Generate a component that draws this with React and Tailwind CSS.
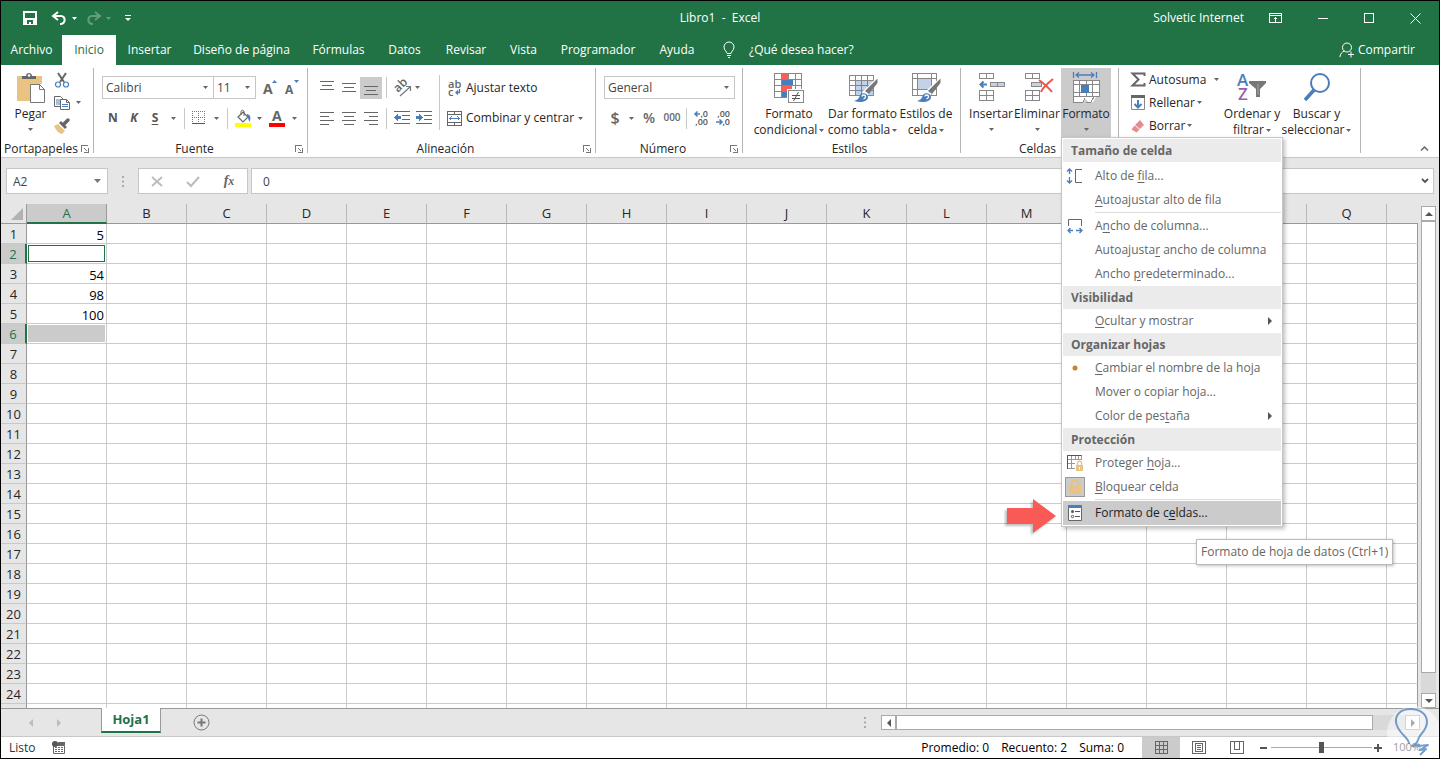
// Packages
import React from 'react';
import clsx from 'clsx';

const tabs = [
  { label: 'Archivo', width: 'w-[61px]' },
  { label: 'Inicio', width: 'w-[54px]', active: true },
  { label: 'Insertar', width: 'w-[67px]' },
  { label: 'Diseño de página', width: 'w-[117px]' },
  { label: 'Fórmulas', width: 'w-[77px]' },
  { label: 'Datos', width: 'w-[55px]' },
  { label: 'Revisar', width: 'w-[68px]' },
  { label: 'Vista', width: 'w-[47px]' },
  { label: 'Programador', width: 'w-[102px]' },
  { label: 'Ayuda', width: 'w-[56px]' }
];

const columns = 'ABCDEFGHIJKLMNOPQ'.split('');
const rows = Array.from({ length: 25 }, (_, i) => i + 1);
const values = { 1: '5', 3: '54', 4: '98', 5: '100' };

const Icon = ({ w = 16, h = 16, children, ...props }) => (
  <svg
    width={w}
    height={h}
    viewBox={`0 0 ${w} ${h}`}
    fill="none"
    className="shrink-0 overflow-visible"
    aria-hidden="true"
    {...props}
  >
    {children}
  </svg>
);

const Caret = ({ color = '#666' }) => (
  <Icon w={5} h={3}>
    <path d="M0 0h5L2.5 3z" fill={color} />
  </Icon>
);

const Divider = ({ className }) => (
  <div className={clsx('flex justify-center shrink-0', className)}>
    <div className="w-px h-full bg-[#c8c8c8]" />
  </div>
);

const Group = ({ label, className, launcher, children }) => (
  <section className={clsx('flex flex-col shrink-0 h-[85px] border-r border-[#b5b5b5]', className)} aria-label={label}>
    <div className="flex h-[73px] shrink-0">{children}</div>
    <div className="flex items-center h-4 shrink-0 pr-1">
      <div className="grow text-center leading-4">{label}</div>
      {launcher && (
        <button type="button" aria-label={`Más opciones de ${label}`}>
          <Icon w={8} h={8} shapeRendering="crispEdges">
            <path d="M.5 6.500V.5h6" stroke="#777" />
            <path d="M7 3v4H3M3 3l3 3" stroke="#777" />
          </Icon>
        </button>
      )}
    </div>
  </section>
);

const BigButton = ({ icon, lines, className, active }) => (
  <button
    type="button"
    className={clsx('flex flex-col items-center shrink-0 h-[69px] pt-[5px]', className, active && 'bg-[#cbcbcb]')}
  >
    <span className="flex items-center justify-center h-[30px]">{icon}</span>
    <span className="mt-[3px] leading-4 whitespace-nowrap">{lines[0]}</span>
    <span className="flex items-center justify-center gap-0.5 h-4 leading-4 whitespace-nowrap">
      {lines[1]}
      <Caret />
    </span>
  </button>
);

const Tool = ({ label, className = 'w-[22px]', active, children }) => (
  <button
    type="button"
    aria-label={label}
    className={clsx('flex items-center justify-center shrink-0 h-[22px]', className, active && 'bg-[#cbcbcb]')}
  >
    {children}
  </button>
);

const Picker = ({ label, value, className }) => (
  <div className={clsx('relative flex items-center h-[23px] border border-[#c6c6c6]', className)}>
    <select aria-label={label} defaultValue={value} className="appearance-none w-full h-full pl-[3px] text-[#444]">
      <option>{value}</option>
    </select>
    <span className="absolute right-[5px] pointer-events-none">
      <Caret />
    </span>
  </div>
);

const Lines = ({ rows: list }) => (
  <Icon w={14} h={14} shapeRendering="crispEdges">
    {list.map(([x, y, w]) => (
      <path key={y} d={`M${x} ${y}.5h${w}`} stroke="#666" />
    ))}
  </Icon>
);

const PasteIcon = () => (
  <Icon w={30} h={30}>
    <path d="M1 3h25v8H15v17H1z" fill="#eac282" />
    <path d="M6 6V3h4c0-4 6-4 6 0h4v3z" fill="#666" />
    <circle cx="13" cy="2.500" r="1.300" fill="#fff" />
    <path d="M14.500 11.500h9l5 5v13h-14z" fill="#fff" stroke="#777" />
    <path d="M23.500 11.500v5h5" stroke="#777" />
  </Icon>
);

const CutIcon = () => (
  <Icon>
    <path d="M4 1l6 9M12 1L6 10" stroke="#666" strokeWidth="2" />
    <circle cx="4" cy="12.500" r="2.500" stroke="#4a7ebb" strokeWidth="1.200" />
    <circle cx="12" cy="12.500" r="2.500" stroke="#4a7ebb" strokeWidth="1.200" />
  </Icon>
);

const CopyIcon = () => (
  <Icon>
    <path d="M.5 1.500h6l3 3v7h-9z" fill="#fff" stroke="#666" />
    <path d="M2 5h4M2 7h4M2 9h4" stroke="#4a7ebb" />
    <path d="M6.500 4.500h6l3 3v7h-9z" fill="#fff" stroke="#666" />
    <path d="M12.500 4.500v3h3" stroke="#666" />
    <path d="M8 9.500h6M8 11.500h6" stroke="#4a7ebb" />
  </Icon>
);

const BrushIcon = () => (
  <Icon>
    <path d="M0 8l4-2 7 7-3 3c-4-1-6-4-8-8z" fill="#eac282" />
    <path d="M5 5l2-2 6 6-2 2z" fill="#666" />
    <path d="M10 6l4-4" stroke="#666" strokeWidth="3.500" strokeLinecap="round" />
  </Icon>
);

const FontSizeIcon = ({ up }) => (
  <Icon w={16} h={18}>
    <text x="0" y="15" fontSize={up ? 14 : 12} fontWeight="700" fill="#666" className="font-['Open_Sans',sans-serif]">
      A
    </text>
    <path d={up ? 'M9 4l2.500-3L14 4z' : 'M9 1l2.500 3L14 1z'} fill="#4a7ebb" />
  </Icon>
);

const BordersIcon = () => (
  <Icon w={14} h={14} shapeRendering="crispEdges">
    <path d="M0 .5h13M0 6.500h13M.5 0v12M6.500 0v12M12.500 0v12" stroke="#777" strokeDasharray="1 1" />
    <path d="M0 12.500h13" stroke="#555" />
  </Icon>
);

const FillIcon = () => (
  <Icon w={16} h={18}>
    <path d="M3 8l5-5 5 5-5 5z" fill="#fff" stroke="#666" strokeWidth="1.200" />
    <path d="M6 6V3c0-2.500 3-2.500 3 0v4" stroke="#666" />
    <path d="M12 5c4 1 4 4 2.500 8-1-2-1-4-2.500-5z" fill="#4a7ebb" />
    <path d="M0 14h16v4H0z" fill="#ff0" />
  </Icon>
);

const FontColorIcon = () => (
  <Icon w={16} h={18}>
    <text x="3" y="12" fontSize="14" fontWeight="700" fill="#666" className="font-['Open_Sans',sans-serif]">
      A
    </text>
    <path d="M0 14h16v4H0z" fill="#f00" />
  </Icon>
);

const OrientationIcon = () => (
  <Icon w={17} h={18}>
    <text
      x="4"
      y="14"
      fontSize="12"
      fontWeight="600"
      fill="#666"
      transform="rotate(-45 4 14)"
      className="font-['Open_Sans',sans-serif]"
    >
      ab
    </text>
    <path d="M6 17l10-9M12 7.500h4.500V12" stroke="#777" strokeWidth="1.200" />
  </Icon>
);

const IndentIcon = ({ right }) => (
  <Icon w={16} h={14} shapeRendering="crispEdges">
    <path d="M0 .5h16M8 4.500h8M8 8.500h8M0 12.500h16" stroke="#666" />
    <path d={right ? 'M0 5h3V2.500L7 6.500 3 10V8H0z' : 'M7 5H4V2.500L0 6.500 4 10V8h3z'} fill="#4a7ebb" />
  </Icon>
);

const WrapIcon = () => (
  <Icon w={14} h={18}>
    <text x="0" y="9" fontSize="11" fontWeight="600" fill="#666" className="font-['Open_Sans',sans-serif]">
      ab
    </text>
    <text x="0" y="17" fontSize="11" fontWeight="600" fill="#666" className="font-['Open_Sans',sans-serif]">
      c
    </text>
    <path d="M11.500 10v3.500H8M10 11.500l-2 2 2 2" stroke="#4a7ebb" strokeWidth="1.300" />
  </Icon>
);

const MergeIcon = () => (
  <Icon w={15} h={15} shapeRendering="crispEdges">
    <path d="M.5.5h14v14H.5zM0 3.500h15M0 11.500h15M7.500 0v3.500M7.500 11.500V15" stroke="#666" />
    <path d="M3 7.500h9M4.500 5.500l-2 2 2 2M10.500 5.500l2 2-2 2" stroke="#4a7ebb" />
  </Icon>
);

const DecimalIcon = ({ less }) => (
  <Icon w={16} h={16}>
    <text x="15" y="7" fontSize="9" textAnchor="end" fill="#555" className="font-['Open_Sans',sans-serif]">
      {less ? ',00' : ',0'}
    </text>
    <text x="15" y="15" fontSize="9" textAnchor="end" fill="#555" className="font-['Open_Sans',sans-serif]">
      {less ? ',0' : ',00'}
    </text>
    <path
      d={less ? 'M1 12h6M4.500 9.500L7 12l-2.500 2.500' : 'M2 4h5M4.500 1.500L2 4l2.500 2.500'}
      stroke="#4a7ebb"
      strokeWidth="1.500"
    />
  </Icon>
);

const ConditionalIcon = () => (
  <Icon w={30} h={30} shapeRendering="crispEdges">
    <path
      d="M.5.500h27v24H.5zM0 6.500h28M0 12.500h28M0 18.500h28M7.500 0v24M14.500 0v24M21.500 0v24"
      fill="#fff"
      stroke="#888"
    />
    <path d="M8 1h6v5H8zM8 13h10v5H8z" fill="#ff5b57" />
    <path d="M8 7h11v5H8zM8 19h5v5H8z" fill="#4a7ebb" />
    <path d="M13 16h17v14H13z" fill="#fff" />
    <path d="M14.500 17.500h15v12h-15z" fill="#fff" stroke="#888" />
    <path d="M18 22.500h8M18 25.500h8" stroke="#555" />
    <path d="M24.500 19l-5 9" stroke="#555" shapeRendering="auto" />
  </Icon>
);

const PaintBrush = () => (
  <g>
    <path d="M15 18L28 5.500l2 .5v3L20 22l-9 6z" fill="#fff" />
    <path d="M17 18L29.500 5.500V10L21 21z" fill="#777" />
    <path d="M6 28c4-1 5-3 6-6 2-3 8-2 8 2 0 5-8 6-14 4z" fill="#4a7ebb" />
    <path d="M14 23.500c0-2 3.500-2 3.500 0s-1 2-2 2.500" stroke="#fff" strokeWidth="1.300" />
  </g>
);

const TableIcon = () => (
  <Icon w={30} h={30}>
    <path
      d="M1.500 2.500h24v20h-24zM1 7.500h25M1 12.500h25M1 17.500h25M7.500 2v20M13.500 2v20M19.500 2v20"
      fill="#fff"
      stroke="#888"
      shapeRendering="crispEdges"
    />
    <path d="M8 8h17v14H8z" fill="#4a7ebb" opacity=".35" />
    <PaintBrush />
  </Icon>
);

const CellStylesIcon = () => (
  <Icon w={30} h={30}>
    <path
      d="M1.500.500h24v22h-24zM1 5.500h25M1 16.500h25M6.500 0v22M20.500 0v22"
      fill="#fff"
      stroke="#888"
      shapeRendering="crispEdges"
    />
    <path d="M7 6h13v10H7z" fill="#c3d2e6" />
    <PaintBrush />
  </Icon>
);

const CellsIcon = ({ remove }) => (
  <Icon w={30} h={30}>
    <g shapeRendering="crispEdges">
      <path d="M3.500.500h14v5h-14zM10.500 1v4" stroke="#888" />
      <path d="M3.500 17.500h14v10h-14zM3 22.500h15M10.500 17v10" stroke="#888" />
      {remove ? (
        <path d="M9.500 9.500h10v4h-10z" fill="#c3d2e6" stroke="#888" />
      ) : (
        <path d="M14.500 9.500h14v4h-14zM21.500 9v4" fill="#c3d2e6" stroke="#888" />
      )}
    </g>
    {remove ? (
      <path d="M17 7c4 3 9 7 13 12M31 6c-5 4-10 8-12 13" stroke="#f0524d" strokeWidth="2" />
    ) : (
      <path d="M11 11.500H4M7.500 8.500l-3 3 3 3" stroke="#4a7ebb" strokeWidth="2" />
    )}
  </Icon>
);

const FormatIcon = () => (
  <Icon w={30} h={32}>
    <path
      d="M2.500 0v6M25.500 0v6M5 3h18M8 .5L5 3l3 2.500M20 .5L23 3l-3 2.500"
      stroke="#4a7ebb"
      strokeWidth="1.300"
    />
    <path d="M2 8h27v17h-4l-3 5h-5l-2-3-3 3H2z" fill="#fff" />
    <path
      d="M2.500 8.500h26v16h-26zM2 12.500h27M2 20.500h27M8.500 8v17M21.500 8v17M15.500 8v4M15.500 20v5M2.500 24v6H12l2-4M15 30h5l3-5"
      stroke="#888"
      shapeRendering="crispEdges"
    />
    <path d="M10 13h8v8h-8z" fill="#4a7ebb" />
  </Icon>
);

const SortIcon = () => (
  <Icon w={30} h={30}>
    <text x="0" y="13" fontSize="17" fontWeight="600" fill="#4a7ebb" className="font-['Open_Sans',sans-serif]">
      A
    </text>
    <text x="1" y="27" fontSize="17" fontWeight="600" fill="#9a5fb4" className="font-['Open_Sans',sans-serif]">
      Z
    </text>
    <path d="M12 8h17v2l-6 6v8h-4v-8l-7-6z" fill="#777" />
    <path d="M21 11v11" stroke="#aaa" />
  </Icon>
);

const FindIcon = () => (
  <Icon w={30} h={30}>
    <circle cx="18" cy="10" r="9" stroke="#4a7ebb" strokeWidth="2" />
    <path d="M12 17L3 27" stroke="#4a7ebb" strokeWidth="3.500" />
  </Icon>
);

const TitleBar = () => (
  <header className="grid grid-cols-[1fr_auto_1fr] items-center h-[34px] shrink-0 text-white">
    <div className="flex items-center pl-5">
      <button type="button" aria-label="Guardar" className="flex justify-center w-[18px]">
        <Icon w={14} h={14} shapeRendering="crispEdges">
          <path d="M0 0h14v14H0zM2 1.500v5h10v-5zM4 9v4h2v-2h2v2h2V9z" fill="#fff" fillRule="evenodd" />
        </Icon>
      </button>
      <button type="button" aria-label="Deshacer" className="flex items-center gap-1 ml-3">
        <Icon w={17} h={14}>
          <path d="M7 1L2 5l5 4M2 5h8c5 0 5 8-1 8" stroke="#fff" strokeWidth="2" />
        </Icon>
        <Caret color="#fff" />
      </button>
      <button type="button" aria-label="Rehacer" className="flex items-center gap-1 ml-2 opacity-30">
        <Icon w={17} h={14}>
          <path d="M10 1l5 4-5 4M15 5H7c-5 0-5 8 1 8" stroke="#fff" strokeWidth="2" />
        </Icon>
        <Caret color="#fff" />
      </button>
      <button type="button" aria-label="Personalizar barra de herramientas" className="ml-[14px]">
        <Icon w={6} h={6}>
          <path d="M0 .5h6" stroke="#fff" />
          <path d="M0 3h6L3 6z" fill="#fff" />
        </Icon>
      </button>
    </div>
    <h1 className="whitespace-pre">Libro1  -  Excel</h1>
    <div className="flex items-center justify-end pr-[18px]">
      <span className="mr-[25px]">Solvetic Internet</span>
      <button type="button" aria-label="Opciones de la cinta" className="mr-9">
        <Icon w={13} h={11} shapeRendering="crispEdges">
          <path d="M.5.5h12v9H.5zM0 2.500h13M6.500 4.500v5M4.500 6.500l2-2 2 2" stroke="#fff" />
        </Icon>
      </button>
      <button type="button" aria-label="Minimizar" className="mr-9">
        <Icon w={10} h={11} shapeRendering="crispEdges">
          <path d="M0 5.500h10" stroke="#fff" />
        </Icon>
      </button>
      <button type="button" aria-label="Maximizar" className="mr-9">
        <Icon w={10} h={10} shapeRendering="crispEdges">
          <path d="M.5.5h9v9h-9z" stroke="#fff" />
        </Icon>
      </button>
      <button type="button" aria-label="Cerrar">
        <Icon w={11} h={11}>
          <path d="M.5.5l10 10M10.500.5l-10 10" stroke="#fff" />
        </Icon>
      </button>
    </div>
  </header>
);

const TabBar = () => (
  <nav className="flex h-[30px] shrink-0 text-white">
    {tabs.map(({ label, width, active }) => (
      <button
        key={label}
        type="button"
        className={clsx('shrink-0 whitespace-nowrap', width, active && 'bg-white text-[#217346]')}
      >
        {label}
      </button>
    ))}
    <button type="button" className="flex items-center gap-[14px] ml-[18px]">
      <Icon w={12} h={16}>
        <path d="M4 11.500c0-2-3-3-3-6.500a5 5 0 0110 0c0 3.500-3 4.500-3 6.500zM4 13.500h4M5 15.500h2" stroke="#fff" />
      </Icon>
      ¿Qué desea hacer?
    </button>
    <button type="button" className="flex items-center gap-1 ml-auto mr-6">
      <Icon w={15} h={16}>
        <circle cx="8" cy="5.500" r="4.500" stroke="#fff" />
        <path d="M1 15c0-3 2-5 4.500-6M9 12.500h6M12 9.500v6" stroke="#fff" />
      </Icon>
      Compartir
    </button>
  </nav>
);

const Key = ({ children }) => <span className="underline underline-offset-2">{children}</span>;

const MenuHeader = ({ children }) => (
  <div className="flex items-center h-[23px] pl-2 bg-[#ebebeb] font-bold">{children}</div>
);

const MenuRule = () => <div className="h-px mb-px ml-8 bg-[#dcdcdc]" />;

const MenuItem = ({ icon, submenu, active, children }) => (
  <button
    type="button"
    role="menuitem"
    className={clsx('flex items-center w-full h-6 pr-[9px]', active && 'bg-[#cbcbcb] text-[#222]')}
  >
    <span className="flex items-center justify-center shrink-0 w-6 mr-2">{icon}</span>
    <span className="grow text-left whitespace-nowrap">{children}</span>
    {submenu && (
      <Icon w={4} h={8}>
        <path d="M0 0v8l4-4z" fill="#555" />
      </Icon>
    )}
  </button>
);

const FormatMenu = () => (
  <div
    role="menu"
    className="absolute z-10 top-full left-0 w-[222px] p-px border border-[#c6c6c6] bg-white text-[#666] shadow-[2px_2px_4px_rgba(0,0,0,0.25)]"
  >
    <div className="mb-0.5">
      <MenuHeader>Tamaño de celda</MenuHeader>
    </div>
    <MenuItem
      icon={
        <Icon>
          <path
            d="M2.500 1v5M2.500 9v6M0 3.500L2.500 1 5 3.500M0 12.500L2.500 15 5 12.500"
            stroke="#4a7ebb"
            strokeWidth="1.300"
          />
          <path d="M15 1.500H8.500v13H15" stroke="#666" />
        </Icon>
      }
    >
      Alto de <Key>f</Key>ila...
    </MenuItem>
    <MenuItem>
      <Key>A</Key>utoajustar alto de fila
    </MenuItem>
    <MenuRule />
    <MenuItem
      icon={
        <Icon>
          <path
            d="M1 12.500h5M9 12.500h6M3.500 10L1 12.500 3.500 15M12.500 10l2.500 2.500-2.500 2.500"
            stroke="#4a7ebb"
            strokeWidth="1.300"
          />
          <path d="M1.500 8V1.500h13V8" stroke="#666" />
        </Icon>
      }
    >
      A<Key>n</Key>cho de columna...
    </MenuItem>
    <MenuItem>
      Autoajusta<Key>r</Key> ancho de columna
    </MenuItem>
    <MenuItem>
      Ancho <Key>p</Key>redeterminado...
    </MenuItem>
    <MenuHeader>Visibilidad</MenuHeader>
    <MenuItem submenu>
      <Key>O</Key>cultar y mostrar
    </MenuItem>
    <MenuHeader>Organizar hojas</MenuHeader>
    <MenuItem
      icon={
        <Icon w={6} h={6}>
          <circle cx="3" cy="3" r="2.500" fill="#c9822b" />
        </Icon>
      }
    >
      <Key>C</Key>ambiar el nombre de la hoja
    </MenuItem>
    <MenuItem>Mover o copiar hoja...</MenuItem>
    <MenuItem submenu>
      Color de pes<Key>t</Key>aña
    </MenuItem>
    <MenuHeader>Protección</MenuHeader>
    <MenuItem
      icon={
        <Icon>
          <path
            d="M.5.500h14v13H.5zM0 4.500h15M0 8.500h15M4.500 0v13M8.500 0v13M11.500 0v13"
            stroke="#999"
            shapeRendering="crispEdges"
          />
          <path d="M.5 14V.5h14" stroke="#555" />
          <path d="M8 5h8v11H8z" fill="#fff" />
          <path d="M9 10h7v6H9z" fill="#eac282" />
          <path d="M10.500 10V8c0-2.500 4-2.500 4 0v2" stroke="#eac282" strokeWidth="1.400" />
          <path d="M12.500 12v2.500" stroke="#fff" />
        </Icon>
      }
    >
      Proteger <Key>h</Key>oja...
    </MenuItem>
    <MenuItem
      icon={
        <span className="flex items-center justify-center size-5 border border-[#999] bg-[#cbcbcb]">
          <Icon w={12} h={16}>
            <path d="M0 7h12v8H0z" fill="#eac282" />
            <path d="M2.500 7V5c0-4.500 7-4.500 7 0v2" stroke="#eac282" strokeWidth="2" />
            <path d="M6 9v4M4.500 10h3" stroke="#cbcbcb" />
          </Icon>
        </span>
      }
    >
      <Key>B</Key>loquear celda
    </MenuItem>
    <MenuRule />
    <div className="relative">
      <MenuItem
        active
        icon={
          <Icon>
            <path d="M1.500.500h13v15h-13z" fill="#fff" stroke="#666" />
            <path d="M1 0h14v3H1z" fill="#4a7ebb" />
            <path d="M8 6.500h5M8 11.500h5" stroke="#555" />
            <circle cx="5.500" cy="6.500" r="1.500" fill="#555" />
            <circle cx="5.500" cy="11.500" r="1.200" stroke="#555" />
          </Icon>
        }
      >
        Formato de c<Key>e</Key>ldas...
      </MenuItem>
      <div className="absolute right-full -top-0.5 mr-1.5 drop-shadow-[-2px_2px_1px_rgba(0,0,0,0.25)]">
        <Icon w={50} h={36}>
          <path d="M0 9h26V0l23 17-23 17v-9H0z" fill="#fa5a55" />
        </Icon>
      </div>
      <div
        role="tooltip"
        className="absolute top-[38px] left-[133px] flex items-center h-[26px] px-1 border border-[#bbb] bg-white whitespace-nowrap shadow-[1px_1px_3px_rgba(0,0,0,0.25)]"
      >
        Formato de hoja de datos (Ctrl+1)
      </div>
    </div>
  </div>
);

const Ribbon = () => (
  <div className="flex h-[93px] shrink-0 pt-[3px] border-b border-[#c8c8c8] bg-white">
    <Group label="Portapapeles" className="w-[93px]" launcher>
      <BigButton icon={<PasteIcon />} lines={['Pegar']} className="ml-1.5 w-[47px]" />
      <div className="flex flex-col">
        <div className="flex items-center h-[23px]">
          <Tool label="Cortar" className="w-4">
            <CutIcon />
          </Tool>
        </div>
        <div className="flex items-center h-[23px]">
          <Tool label="Copiar" className="gap-[6px]">
            <CopyIcon />
            <Caret />
          </Tool>
        </div>
        <div className="flex items-center h-[23px]">
          <Tool label="Copiar formato" className="w-4">
            <BrushIcon />
          </Tool>
        </div>
      </div>
    </Group>
    <Group label="Fuente" className="w-[214px]" launcher>
      <div className="flex flex-col gap-2 pt-2 pl-2">
        <div className="flex items-center">
          <Picker label="Fuente" value="Calibri" className="w-[112px]" />
          <Picker label="Tamaño de fuente" value="11" className="w-[43px] -ml-px" />
          <Tool label="Aumentar tamaño de fuente" className="w-[22px] ml-1">
            <FontSizeIcon up />
          </Tool>
          <Tool label="Disminuir tamaño de fuente">
            <FontSizeIcon />
          </Tool>
        </div>
        <div className="flex items-center text-[#555] font-bold">
          <Tool label="Negrita">N</Tool>
          <Tool label="Cursiva" className="w-5 italic">
            K
          </Tool>
          <Tool label="Subrayado" className="w-[22px] underline underline-offset-2">
            S
          </Tool>
          <Tool label="Tipos de subrayado" className="w-[14px]">
            <Caret />
          </Tool>
          <Divider className="w-2 h-[21px]" />
          <Tool label="Bordes">
            <BordersIcon />
          </Tool>
          <Tool label="Más bordes" className="w-3">
            <Caret />
          </Tool>
          <Divider className="w-[10px] h-[21px]" />
          <Tool label="Color de relleno">
            <FillIcon />
          </Tool>
          <Tool label="Más colores de relleno" className="w-[10px]">
            <Caret />
          </Tool>
          <Tool label="Color de fuente" className="w-[26px]">
            <FontColorIcon />
          </Tool>
          <Tool label="Más colores de fuente" className="w-2">
            <Caret />
          </Tool>
        </div>
      </div>
    </Group>
    <Group label="Alineación" className="w-[288px]" launcher>
      <div className="flex flex-col gap-2 pt-2 pl-2">
        <div className="flex items-center h-[23px]">
          <Tool label="Alinear arriba">
            <Lines rows={[[0, 0, 14], [2, 4, 10], [0, 8, 14]]} />
          </Tool>
          <Tool label="Alinear en el medio">
            <Lines rows={[[0, 2, 14], [2, 6, 10], [0, 10, 14]]} />
          </Tool>
          <Tool label="Alinear abajo" active>
            <Lines rows={[[0, 5, 14], [2, 9, 10], [0, 13, 14]]} />
          </Tool>
          <Divider className="w-[9px] h-[21px]" />
          <Tool label="Orientación" className="gap-1 ml-[3px]">
            <OrientationIcon />
            <Caret />
          </Tool>
        </div>
        <div className="flex items-center">
          <Tool label="Alinear a la izquierda">
            <Lines rows={[[0, 1, 14], [0, 5, 9], [0, 9, 14], [0, 13, 9]]} />
          </Tool>
          <Tool label="Centrar">
            <Lines rows={[[0, 1, 14], [2, 5, 10], [0, 9, 14], [2, 13, 10]]} />
          </Tool>
          <Tool label="Alinear a la derecha">
            <Lines rows={[[0, 1, 14], [5, 5, 9], [0, 9, 14], [5, 13, 9]]} />
          </Tool>
          <Divider className="w-[9px] h-[21px]" />
          <Tool label="Disminuir sangría">
            <IndentIcon />
          </Tool>
          <Tool label="Aumentar sangría">
            <IndentIcon right />
          </Tool>
        </div>
      </div>
      <Divider className="w-2 h-[55px] mt-[7px]" />
      <div className="flex flex-col gap-2 pt-2">
        <button type="button" className="flex items-center h-[23px]">
          <span className="flex justify-center w-[23px]">
            <WrapIcon />
          </span>
          Ajustar texto
        </button>
        <button type="button" className="flex items-center h-[22px] whitespace-nowrap">
          <span className="flex justify-center w-[23px]">
            <MergeIcon />
          </span>
          <span className="mr-1">Combinar y centrar</span>
          <Caret />
        </button>
      </div>
    </Group>
    <Group label="Número" className="w-[147px]" launcher>
      <div className="flex flex-col gap-2 pt-2 pl-2">
        <Picker label="Formato de número" value="General" className="w-[131px]" />
        <div className="flex items-center text-[#666] font-semibold">
          <Tool label="Formato de contabilidad" className="w-[22px] text-base">
            $
          </Tool>
          <Tool label="Más formatos" className="w-[10px]">
            <Caret />
          </Tool>
          <Tool label="Estilo porcentual" className="w-[26px] text-sm">
            %
          </Tool>
          <Tool label="Estilo millares" className="w-5 text-[10px]">
            000
          </Tool>
          <Divider className="w-2 h-[21px]" />
          <Tool label="Aumentar decimales">
            <DecimalIcon />
          </Tool>
          <Tool label="Disminuir decimales">
            <DecimalIcon less />
          </Tool>
        </div>
      </div>
    </Group>
    <Group label="Estilos" className="w-[218px]">
      <BigButton icon={<ConditionalIcon />} lines={['Formato', 'condicional']} className="w-[74px] ml-[9px]" />
      <BigButton icon={<TableIcon />} lines={['Dar formato', 'como tabla']} className="w-[73px]" />
      <BigButton icon={<CellStylesIcon />} lines={['Estilos de', 'celda']} className="w-[54px]" />
    </Group>
    <Group label="Celdas" className="w-[158px]">
      <BigButton icon={<CellsIcon />} lines={['Insertar']} className="w-11 ml-2" />
      <BigButton icon={<CellsIcon remove />} lines={['Eliminar']} className="w-12" />
      <div className="relative h-[69px]">
        <BigButton icon={<FormatIcon />} lines={['Formato']} className="w-[50px]" active />
        <FormatMenu />
      </div>
    </Group>
    <Group label="Edición" className="w-[242px]">
      <div className="flex flex-col w-[97px] ml-2">
        <button type="button" className="flex items-center h-[23px]">
          <span className="flex justify-center w-[22px]">
            <Icon w={15} h={15}>
              <path d="M13.500 4V1.500h-12l6 6-6 6h12V11" stroke="#666" strokeWidth="2" />
            </Icon>
          </span>
          <span className="mr-2">Autosuma</span>
          <Caret />
        </button>
        <button type="button" className="flex items-center h-[23px]">
          <span className="flex justify-center w-[22px]">
            <Icon w={14} h={15}>
              <path d="M.5.500h13v14H.5z" stroke="#888" />
              <path d="M0 0h14v3H0z" fill="#666" />
              <path d="M7 5v7M3.500 9L7 12.500 10.500 9" stroke="#4a7ebb" strokeWidth="2" />
            </Icon>
          </span>
          <span className="mr-0.5">Rellenar</span>
          <Caret />
        </button>
        <button type="button" className="flex items-center h-[23px]">
          <span className="flex justify-center w-[22px]">
            <Icon w={14} h={14}>
              <path d="M9 1l4 5-4 4-5-4z" fill="#e88b90" />
              <path d="M3.500 6.500l5 4-3 3-5-3z" fill="#e88b90" />
            </Icon>
          </span>
          <span className="mr-0.5">Borrar</span>
          <Caret />
        </button>
      </div>
      <BigButton icon={<SortIcon />} lines={['Ordenar y', 'filtrar']} className="w-14" />
      <BigButton icon={<FindIcon />} lines={['Buscar y', 'seleccionar']} className="w-[73px]" />
    </Group>
    <button type="button" aria-label="Contraer la cinta" className="self-end ml-auto mr-[10px] mb-1.5">
      <Icon w={9} h={5}>
        <path d="M1 4.500L4.500 1 8 4.500" stroke="#666" strokeWidth="1.500" />
      </Icon>
    </button>
  </div>
);

const FormulaBar = () => (
  <div className="flex items-start h-[46px] shrink-0 pt-[10px] pl-[5px] pr-[5px] bg-[#e6e6e6]">
    <div className="relative flex items-center shrink-0 w-[102px] h-[26px] border border-[#c6c6c6] bg-white">
      <input aria-label="Cuadro de nombres" defaultValue="A2" className="w-full h-full pl-1.5 text-[#444]" />
      <span className="absolute right-1.5 pointer-events-none">
        <Icon w={7} h={4}>
          <path d="M0 0h7L3.500 4z" fill="#777" />
        </Icon>
      </span>
    </div>
    <div className="flex items-center justify-center shrink-0 w-[30px] h-[26px]">
      <Icon w={2} h={11}>
        <path d="M0 0h2v2H0zM0 4.500h2v2H0zM0 9h2v2H0z" fill="#aaa" />
      </Icon>
    </div>
    <div className="flex items-center shrink-0 w-[110px] h-[26px] border border-[#c6c6c6] bg-white">
      <button type="button" aria-label="Cancelar" className="flex justify-center w-9">
        <Icon w={12} h={11}>
          <path d="M1 1l10 9M11 1L1 10" stroke="#bbb" strokeWidth="1.800" />
        </Icon>
      </button>
      <button type="button" aria-label="Introducir" className="flex justify-center w-9">
        <Icon w={14} h={11}>
          <path d="M1 6l4 4 8-9" stroke="#bbb" strokeWidth="2" />
        </Icon>
      </button>
      <button
        type="button"
        aria-label="Insertar función"
        className="w-9 italic font-bold text-sm text-[#666] font-['Liberation_Serif',serif]"
      >
        f<span className="text-xs">x</span>
      </button>
    </div>
    <div className="flex items-center grow h-[26px] ml-[3px] border border-[#c6c6c6] bg-white">
      <input aria-label="Barra de fórmulas" defaultValue="0" className="grow h-full pl-[11px] text-[#444]" />
      <button type="button" aria-label="Expandir barra de fórmulas" className="mr-1">
        <Icon w={8} h={6}>
          <path d="M1 1l3 3 3-3" stroke="#555" strokeWidth="1.800" />
        </Icon>
      </button>
    </div>
  </div>
);

const Sheet = () => (
  <table className="w-full table-fixed border-separate border-spacing-0 leading-4">
    <colgroup>
      <col className="w-[26px]" />
      {columns.map(column => (
        <col key={column} className="w-20" />
      ))}
      <col />
    </colgroup>
    <thead>
      <tr className="h-5 bg-[#e6e6e6]">
        <th className="p-0 border-r border-b border-[#999]">
          <span className="flex justify-end pr-[3px]">
            <Icon w={12} h={12}>
              <path d="M12 0v12H0z" fill="#b2b2b2" />
            </Icon>
          </span>
        </th>
        {columns.map(column => (
          <th
            key={column}
            className={clsx(
              'p-0 h-5 border-r font-normal text-[13px]',
              column === 'A'
                ? 'border-b-2 border-r-[#999] border-b-[#217346] bg-[#cbcbcb] text-[#217346]'
                : 'pb-px border-b border-r-[#b8b8b8] border-b-[#999]'
            )}
          >
            {column}
          </th>
        ))}
        <th className="p-0 border-b border-[#999]" />
      </tr>
    </thead>
    <tbody>
      {rows.map(row => {
        const selected = row === 2 || row === 6;

        return (
          <tr key={row} className="h-5">
            <th
              className={clsx(
                'p-0 h-5 border-b border-b-[#c8c8c8] font-normal text-[13px]',
                selected
                  ? 'border-r-2 border-r-[#217346] bg-[#cbcbcb] text-[#217346]'
                  : 'border-r border-r-[#999] bg-[#e6e6e6]'
              )}
            >
              {row}
            </th>
            {columns.map(column => (
              <td
                key={column}
                className={clsx(
                  'border-r border-b border-[#cbcbcb] text-right',
                  column === 'A' && selected ? 'p-px' : 'p-0'
                )}
              >
                {column === 'A' && row === 2 && <div className="h-[17px] border border-[#217346]" />}
                {column === 'A' && row === 6 && <div className="h-[17px] bg-[#cbcbcb]" />}
                {column === 'A' && values[row] && <div className="pt-0.5 pr-0.5 text-[13px] text-black">{values[row]}</div>}
              </td>
            ))}
            <td className="p-0 border-r border-b border-[#cbcbcb] border-r-[#999]" />
          </tr>
        );
      })}
    </tbody>
  </table>
);

const ScrollButton = ({ label, path, className }) => (
  <button
    type="button"
    aria-label={label}
    className={clsx('flex items-center justify-center shrink-0 size-[15px] border border-[#aaa] bg-white', className)}
  >
    <Icon w={8} h={8}>
      <path d={path} fill="#555" />
    </Icon>
  </button>
);

const VerticalScroll = () => (
  <div className="flex flex-col shrink-0 w-[21px] pt-0.5 pl-[3px] pr-[3px] bg-[#e6e6e6]">
    <ScrollButton label="Subir" path="M0 6h8L4 2z" />
    <div className="grow pb-5 bg-[#d9d9d9]">
      <div className="h-full border border-[#aaa] bg-white" />
    </div>
    <ScrollButton label="Bajar" path="M0 2h8L4 6z" />
  </div>
);

const SheetTabs = () => (
  <div className="flex items-start h-7 shrink-0 border-t border-[#999] bg-[#e6e6e6]">
    <div className="flex items-center gap-6 w-[100px] h-[27px] pl-7">
      <button type="button" aria-label="Hoja anterior">
        <Icon w={4} h={8}>
          <path d="M4 0v8L0 4z" fill="#bbb" />
        </Icon>
      </button>
      <button type="button" aria-label="Hoja siguiente">
        <Icon w={4} h={8}>
          <path d="M0 0v8l4-4z" fill="#bbb" />
        </Icon>
      </button>
    </div>
    <button
      type="button"
      className="w-[60px] h-[25px] -mt-px border-x border-b-2 border-x-[#999] border-b-[#217346] bg-white font-bold text-[13px] text-[#217346]"
    >
      Hoja1
    </button>
    <button type="button" aria-label="Hoja nueva" className="flex items-center h-[27px] ml-8">
      <Icon w={17} h={17}>
        <circle cx="8.500" cy="8.500" r="7.500" stroke="#777" />
        <path d="M4.500 8.500h8M8.500 4.500v8" stroke="#777" strokeWidth="2" />
      </Icon>
    </button>
    <div className="flex items-center h-[27px] ml-auto mr-[15px]">
      <Icon w={2} h={11}>
        <path d="M0 0h2v2H0zM0 4.500h2v2H0zM0 9h2v2H0z" fill="#aaa" />
      </Icon>
    </div>
    <div className="flex w-[539px] h-[15px] mt-1.5 mr-[19px] bg-[#d9d9d9]">
      <ScrollButton label="Izquierda" path="M6 0v8L2 4z" />
      <div className="grow mr-8 border border-[#aaa] bg-white" />
      <ScrollButton label="Derecha" path="M2 0v8l4-4z" />
    </div>
  </div>
);

const StatusBar = () => (
  <footer className="flex items-center h-[22px] shrink-0 border-t border-[#c8c8c8] bg-white text-[#333]">
    <span className="ml-2 mr-4">Listo</span>
    <button type="button" aria-label="Grabar macro">
      <Icon w={14} h={14}>
        <path d="M1.500 4.500h11v8h-11z" fill="#fff" stroke="#666" />
        <path d="M6 1h7v3H6z" fill="#666" />
        <path d="M3 6.500h8M3 8.500h8M3 10.500h8" stroke="#666" strokeDasharray="2 1" />
        <circle cx="3" cy="3" r="3" fill="#555" />
      </Icon>
    </button>
    <div className="flex gap-3 ml-auto mr-[18px] text-black">
      <span>Promedio: 0</span>
      <span>Recuento: 2</span>
      <span>Suma: 0</span>
    </div>
    <button type="button" aria-label="Normal" className="flex items-center justify-center w-[38px] h-full bg-[#cbcbcb]">
      <Icon w={13} h={13} shapeRendering="crispEdges">
        <path d="M.5.500h12v12H.5zM0 4.500h13M0 8.500h13M4.500 0v13M8.500 0v13" stroke="#666" />
      </Icon>
    </button>
    <button type="button" aria-label="Diseño de página" className="flex items-center justify-center w-[38px] h-full">
      <Icon w={14} h={13} shapeRendering="crispEdges">
        <path d="M.5.500h13v12H.5zM3.500 2.500h7v8h-7zM5 4.500h4M5 6.500h4M5 8.500h4" stroke="#666" />
      </Icon>
    </button>
    <button type="button" aria-label="Ver salto de página" className="flex items-center justify-center w-[38px] h-full">
      <Icon w={14} h={13} shapeRendering="crispEdges">
        <path d="M.5.500h13v12H.5zM4.500 0v8.500h5V0M0 8.500h1" stroke="#666" />
      </Icon>
    </button>
    <button type="button" aria-label="Alejar" className="ml-1">
      <Icon w={8} h={8} shapeRendering="crispEdges">
        <path d="M0 3h7v2H0z" fill="#555" />
      </Icon>
    </button>
    <input
      type="range"
      aria-label="Zoom"
      defaultValue="50"
      className="w-[101px] h-3 ml-[3px] appearance-none bg-transparent [&::-webkit-slider-runnable-track]:h-px [&::-webkit-slider-runnable-track]:bg-[#aaa] [&::-webkit-slider-thumb]:appearance-none [&::-webkit-slider-thumb]:w-[5px] [&::-webkit-slider-thumb]:h-[11px] [&::-webkit-slider-thumb]:-mt-[5px] [&::-webkit-slider-thumb]:bg-[#555]"
    />
    <button type="button" aria-label="Acercar" className="ml-0.5">
      <Icon w={8} h={8} shapeRendering="crispEdges">
        <path d="M0 3h8v2H0zM3 0h2v8H3z" fill="#555" />
      </Icon>
    </button>
    <span className="w-[46px] ml-[11px] text-[11px]">100%</span>
  </footer>
);

const Watermark = () => (
  <div className="absolute right-0 bottom-0 z-20 pointer-events-none">
    <Icon w={56} h={56}>
      <circle cx="31" cy="31" r="27" fill="#fff" opacity=".5" />
      <path
        d="M26 42c1-6-12-11-13-22C12 12 19 7 27 7c10 0 17 5 17 13 0 9-8 12-9 18-1 3-3 5-6 6l8-1M35 44l10-1-8 5 6-1-6 6"
        stroke="#4a7ebb"
        strokeWidth="2"
        strokeLinejoin="round"
        opacity=".75"
      />
    </Icon>
  </div>
);

const App = () => (
  <div className="relative flex flex-col h-screen overflow-hidden border border-black bg-[#217346] text-xs text-[#262626] font-['Open_Sans',sans-serif]">
    <TitleBar />
    <TabBar />
    <Ribbon />
    <FormulaBar />
    <main className="flex grow min-h-0 bg-white">
      <div className="grow overflow-hidden">
        <Sheet />
      </div>
      <VerticalScroll />
    </main>
    <SheetTabs />
    <StatusBar />
    <Watermark />
  </div>
);

export default App;
